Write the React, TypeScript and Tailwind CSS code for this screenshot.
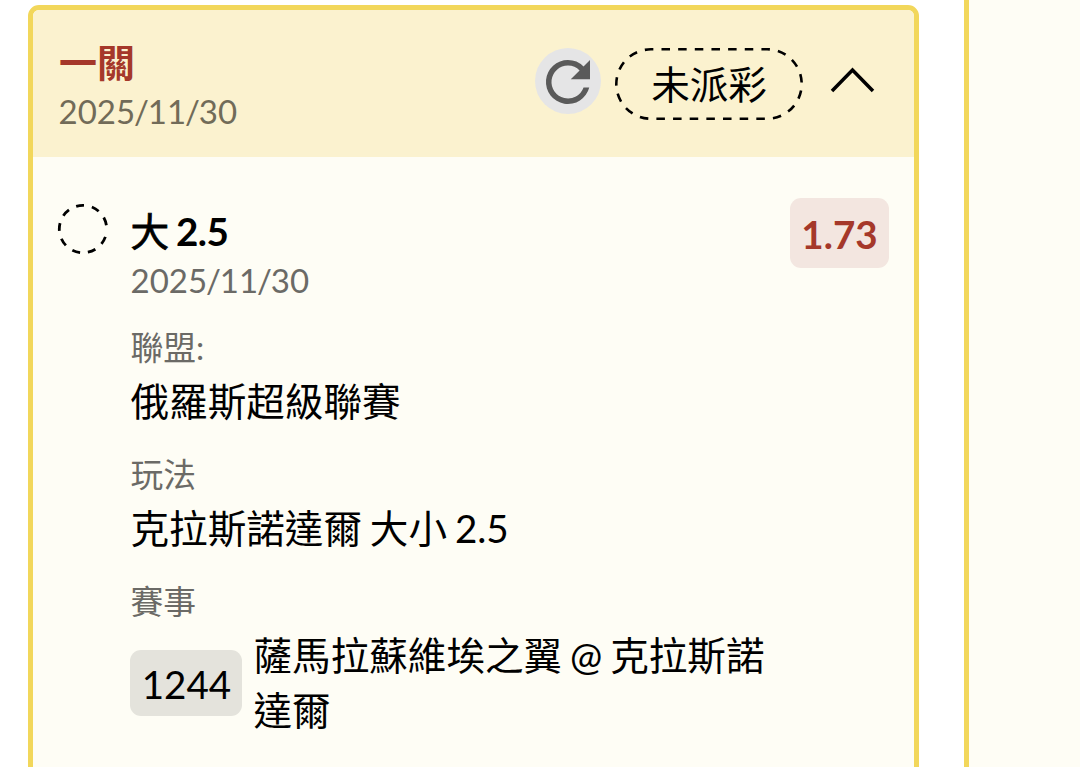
// App.tsx = Bet slip card with one selection, next card peeking in from the right.
interface FieldProps {
    label: string;
    value: string;
}

interface SlashDateProps {
    year: string;
    month: string;
    day: string;
}

// slashes sit a little tighter than the digits
const SlashDate = ({ year, month, day }: SlashDateProps) => (
    <>
        {year}<span className="mx-[-1.1px]">/</span>{month}<span className="mx-[-1.1px]">/</span>{day}
    </>
);

const Field = ({ label, value }: FieldProps) => {
    return (
        <div className="mb-[19px]">
            <p className="h-[47px] text-[32.8px] leading-[48px] text-[#6b6a66]">{label}</p>
            <p className="h-[61px] text-[38.6px] leading-[60px] [word-spacing:-2px]">{value}</p>
        </div>
    );
};

const RefreshIcon = () => (
    <svg className="mt-px" width="66" height="66" viewBox="0 0 24 24">
        <path
            d="M17.65 6.35A7.96 7.96 0 0 0 12 4a8 8 0 1 0 7.73 10h-2.08A6 6 0 1 1 12 6c1.66 0 3.14.69 4.22 1.78L13 11h7V4z"
            fill="#5a5a5a"
        />
    </svg>
);

const SlipHeader = () => {
    return (
        <header className="flex h-[147px] bg-[#fbf2cf] pt-[29px] pl-[26px] pr-[39px]">
            <div className="flex-1">
                <h1 className="h-[48px] text-[38px] font-bold leading-[46px] text-[#a5382a]">一關</h1>
                <p className="-ml-[0.5px] h-[48px] text-[33px] leading-[48px] text-[#716b58]">
                    <SlashDate year="2025" month="11" day="30" />
                </p>
            </div>
            <div className="mt-[9px] flex h-[72px]">
                <button className="mr-[14px] flex size-[66px] items-center justify-center rounded-full bg-[#e5e5e6]">
                    <RefreshIcon />
                </button>
                {/* dashed pill */}
                <div className="relative mr-[27px] flex h-[72px] w-[188px] items-center justify-center">
                    <svg className="absolute inset-0" width="188" height="72" fill="none">
                        <rect x="1.3" y="1.3" width="185.4" height="69.4" rx="34.7" pathLength="459" stroke="black" strokeWidth="2.6" strokeDasharray="8.7 8.3" strokeDashoffset="6.3" />
                    </svg>
                    <span className="text-[38.6px] leading-[60px]">未派彩</span>
                </div>
                <svg className="mt-[18px]" width="45" height="28" fill="none">
                    <path d="M2 25 L22.5 4 L43 25" stroke="black" strokeWidth="3.5" />
                </svg>
            </div>
        </header>
    );
};

const Selection = () => {
    return (
        <section className="flex pt-[46px] pl-[24px]">
            <svg className="mr-[21.5px] shrink-0" width="52" height="52" fill="none">
                <circle cx="26" cy="26" r="23.7" stroke="black" strokeWidth="2.8" strokeDasharray="8 8" strokeDashoffset="8" />
            </svg>
            <div className="w-[659.5px]">
                <h2 className="h-[53px] text-[38.6px] font-bold leading-[56px] tracking-[-0.5px] [word-spacing:-1.5px]">
                    <span className="font-normal [-webkit-text-stroke:0.8px_black]">大</span> 2.5
                </h2>
                <p className="mb-[20px] h-[48px] text-[33px] leading-[48px] text-[#6b6a66]">
                    <SlashDate year="2025" month="11" day="30" />
                </p>
                <Field label="聯盟:" value="俄羅斯超級聯賽" />
                <Field label="玩法" value="克拉斯諾達爾 大小 2.5" />
                <p className="h-[50px] text-[32.8px] leading-[48px] text-[#6b6a66]">賽事</p>
                <div className="-ml-px flex items-center">
                    <span className="mr-[12px] flex h-[66px] w-[112px] shrink-0 items-center justify-center rounded-[11px] bg-[#e4e3dc] pt-[4px] pl-[2px] text-[38.6px]">
                        1244
                    </span>
                    <p className="w-[520px] text-[38.6px] leading-[55px] [word-spacing:-2px]">薩馬拉蘇維埃之翼 @ 克拉斯諾達爾</p>
                </div>
            </div>
            <span className="-mt-[5px] flex h-[70px] w-[99px] items-center justify-center rounded-[11px] bg-[#f3e6e0] pt-[3px] text-[38.6px] font-bold text-[#a5382a]">
                1.73
            </span>
        </section>
    );
};

const App = () => {
    return (
        <main className="flex h-[767px] w-[1080px] overflow-hidden bg-white font-['Lato','Noto_Sans_CJK_TC',sans-serif] text-black">
            <article className="mt-[5px] ml-[28px] h-[850px] w-[891px] shrink-0 overflow-hidden rounded-[11px] border-5 border-[#f2d75b] bg-[#fefdf5]">
                <SlipHeader />
                <Selection />
            </article>
            <aside className="ml-[45px] flex-1 border-l-5 border-[#f2d75b] bg-[#fefdf5]" />
        </main>
    );
};

export default App;
